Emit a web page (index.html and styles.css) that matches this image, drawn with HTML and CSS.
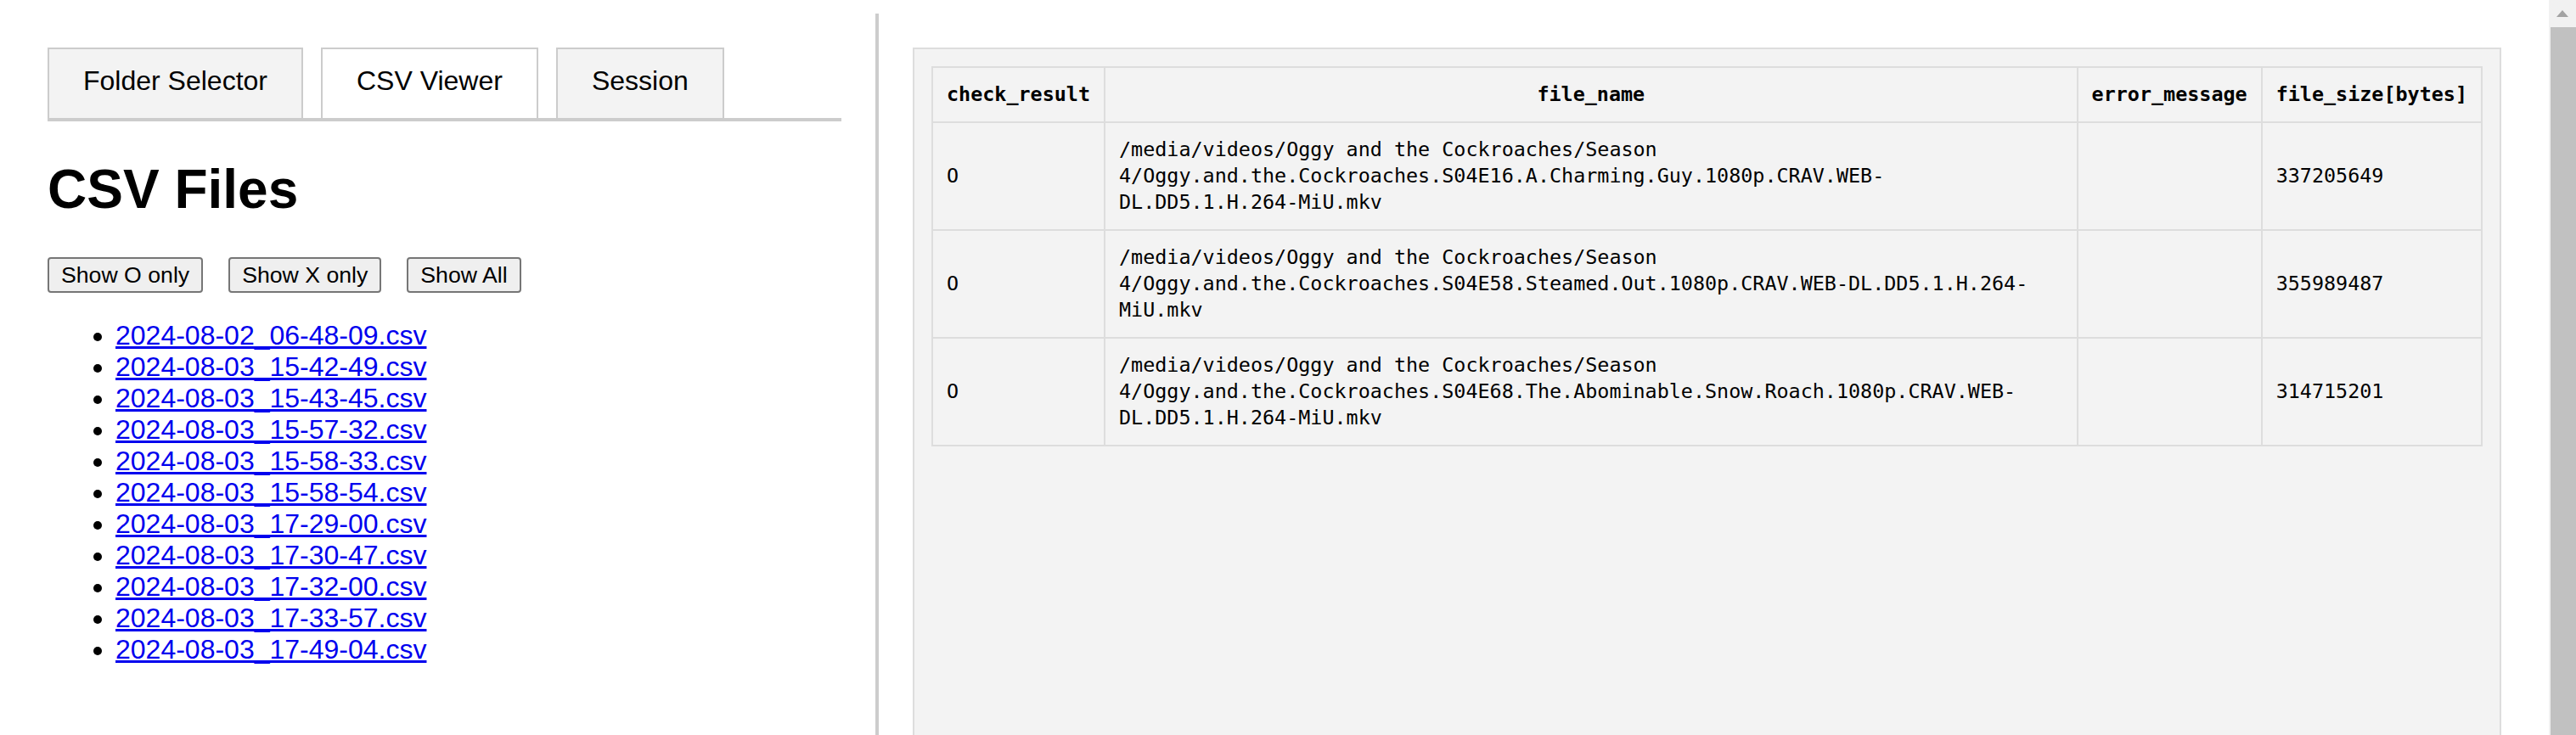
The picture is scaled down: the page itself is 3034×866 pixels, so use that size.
FILE: index.html
```html
<!DOCTYPE html>
<html lang="en">
<head>
<meta charset="utf-8">
<title>CSV Viewer</title>
<link rel="stylesheet" href="styles.css">
</head>
<body>
<div class="page">
  <div class="left">
    <div class="tabs">
      <div class="tab">Folder Selector</div>
      <div class="tab active">CSV Viewer</div>
      <div class="tab">Session</div>
    </div>
    <h1 class="title">CSV Files</h1>
    <div class="filters">
      <button class="btn">Show O only</button>
      <button class="btn">Show X only</button>
      <button class="btn">Show All</button>
    </div>
    <ul class="files">
      <li><a href="#">2024-08-02_06-48-09.csv</a></li>
      <li><a href="#">2024-08-03_15-42-49.csv</a></li>
      <li><a href="#">2024-08-03_15-43-45.csv</a></li>
      <li><a href="#">2024-08-03_15-57-32.csv</a></li>
      <li><a href="#">2024-08-03_15-58-33.csv</a></li>
      <li><a href="#">2024-08-03_15-58-54.csv</a></li>
      <li><a href="#">2024-08-03_17-29-00.csv</a></li>
      <li><a href="#">2024-08-03_17-30-47.csv</a></li>
      <li><a href="#">2024-08-03_17-32-00.csv</a></li>
      <li><a href="#">2024-08-03_17-33-57.csv</a></li>
      <li><a href="#">2024-08-03_17-49-04.csv</a></li>
    </ul>
  </div>
  <div class="right">
    <div class="viewer">
      <table class="grid">
        <thead>
          <tr>
            <th>check_result</th>
            <th>file_name</th>
            <th>error_message</th>
            <th>file_size[bytes]</th>
          </tr>
        </thead>
        <tbody>
          <tr>
            <td>O</td>
            <td>/media/videos/Oggy and the Cockroaches/Season 4/Oggy.and.the.Cockroaches.S04E16.A.Charming.Guy.1080p.CRAV.WEB-DL.DD5.1.H.264-MiU.mkv</td>
            <td></td>
            <td>337205649</td>
          </tr>
          <tr>
            <td>O</td>
            <td>/media/videos/Oggy and the Cockroaches/Season 4/Oggy.and.the.Cockroaches.S04E58.Steamed.Out.1080p.CRAV.WEB-DL.DD5.1.H.264-MiU.mkv</td>
            <td></td>
            <td>355989487</td>
          </tr>
          <tr>
            <td>O</td>
            <td>/media/videos/Oggy and the Cockroaches/Season 4/Oggy.and.the.Cockroaches.S04E68.The.Abominable.Snow.Roach.1080p.CRAV.WEB-DL.DD5.1.H.264-MiU.mkv</td>
            <td></td>
            <td>314715201</td>
          </tr>
        </tbody>
      </table>
    </div>
  </div>
</div>
<div class="scrollbar">
  <div class="sb-arrow"><span class="sb-tri"></span></div>
  <div class="sb-thumb"></div>
</div>
</body>
</html>
```
FILE: styles.css
```css
html, body {
  margin: 0;
  padding: 0;
  height: 866px;
  overflow: hidden;
  background: #ffffff;
}

body {
  display: flex;
  font-family: "Liberation Sans", Arial, sans-serif;
  color: #000;
}

.page {
  flex: 1;
  display: flex;
  align-items: flex-start;
  padding: 16px 0 0 16px;
  min-width: 0;
}

.left {
  width: 935px;
  flex: none;
  padding: 40px;
  border-right: 4px solid #cccccc;
  min-height: 1200px;
}

.tabs {
  display: flex;
  gap: 21px;
  border-bottom: 4px solid #cccccc;
}

.tab {
  font-size: 32px;
  line-height: 37px;
  padding: 19px 40px 25px;
  border: 2px solid #cccccc;
  border-bottom: none;
  background: #f3f3f3;
}

.tab.active {
  background: #ffffff;
}

.title {
  font-size: 64px;
  font-weight: bold;
  line-height: 74px;
  margin: 43px 0 43px;
}

.filters {
  display: flex;
  gap: 30px;
}

.btn {
  font-family: "Liberation Sans", Arial, sans-serif;
  font-size: 26.67px;
  line-height: 30px;
  padding: 4px 14px;
  border: 2px solid #767676;
  border-radius: 4px;
  background: #efefef;
  color: #000;
}

.files {
  margin: 32px 0 0;
  padding-left: 80px;
  font-size: 32px;
  line-height: 37px;
}

.files a {
  color: #0000ee;
  text-decoration: underline;
}

.right {
  flex: 1;
  padding: 40px 56px 0 40px;
  min-width: 0;
}

.viewer {
  background: #f3f3f3;
  border: 2px solid #dddddd;
  padding: 20px;
  min-height: 1200px;
}

.grid {
  width: 100%;
  border-collapse: collapse;
  border: 2px solid #dddddd;
  font-family: "DejaVu Sans Mono", "Liberation Mono", monospace;
  font-size: 23.4px;
  line-height: 31px;
  color: #000;
}

.grid th,
.grid td {
  border: 2px solid #dddddd;
  padding: 16px;
}

.grid th {
  font-weight: bold;
  text-align: center;
}

.grid td {
  text-align: left;
  vertical-align: middle;
}

.scrollbar {
  width: 32px;
  flex: none;
  display: flex;
  flex-direction: column;
  background: #f1f1f1;
}

.sb-arrow {
  height: 32px;
  display: flex;
  align-items: center;
  justify-content: center;
}

.sb-tri {
  width: 0;
  height: 0;
  border-left: 7px solid transparent;
  border-right: 7px solid transparent;
  border-bottom: 8px solid #a3a3a3;
}

.sb-thumb {
  flex: 1;
  background: #c1c1c1;
  margin-left: 2px;
}
```
